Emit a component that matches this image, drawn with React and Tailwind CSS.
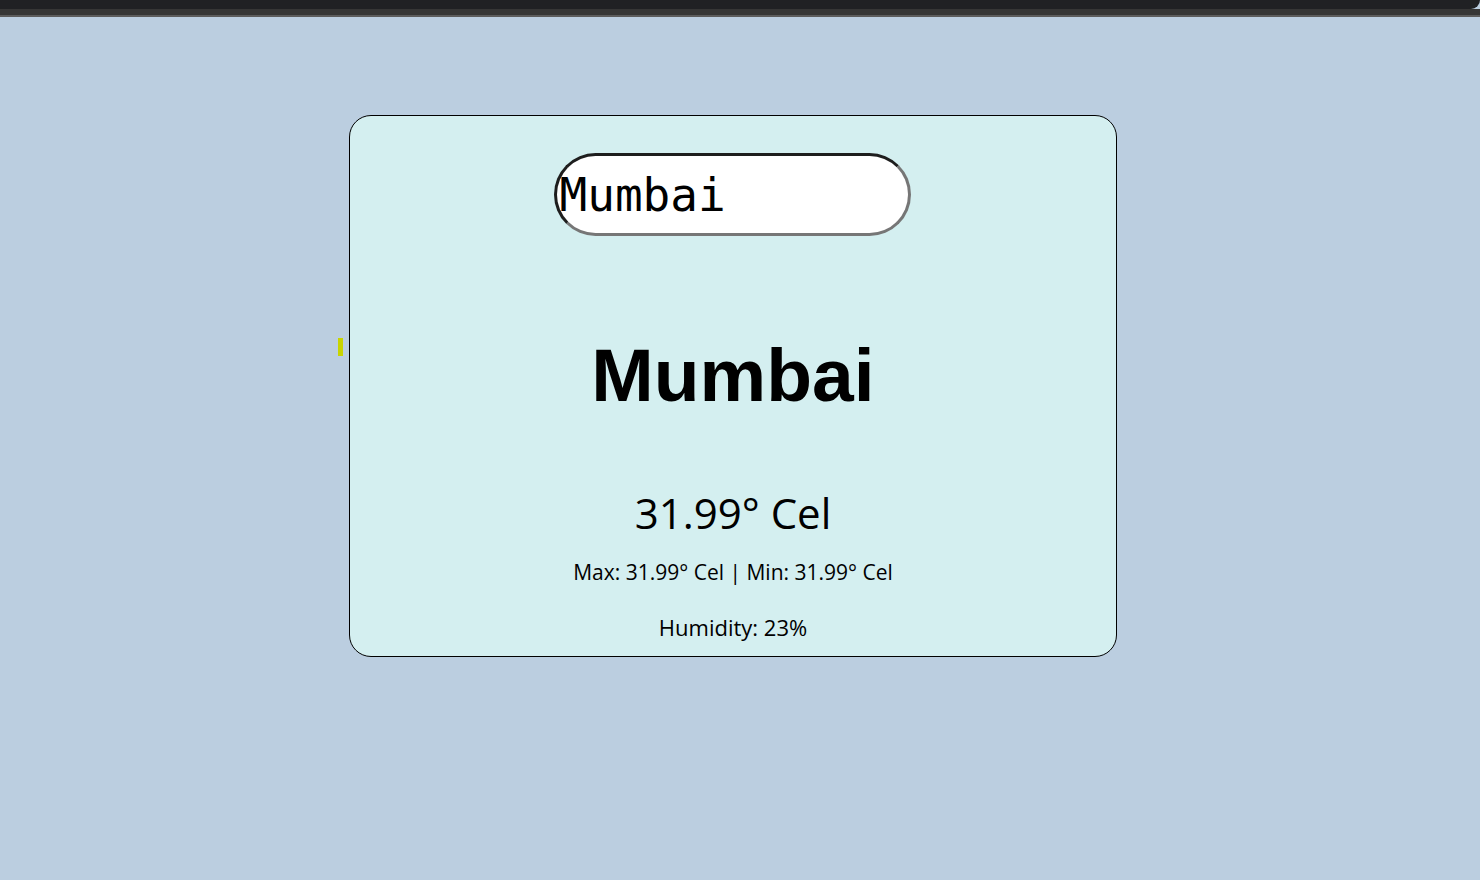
import React from 'react';

const App = () => {
    return (
        <div className="relative min-h-screen bg-[#bbcee0] font-['Liberation_Sans',sans-serif]">
            {/* browser chrome strip */}
            <div className="h-[9px] bg-[#202124] rounded-br-[10px]"></div>
            <div className="h-[6px] bg-[#363636]"></div>
            <div className="h-[2px] bg-[#5c5c5c]"></div>

            <div className="absolute left-[338px] top-[338px] w-[5px] h-[18px] bg-[#c8d400]"></div>

            <div className="ml-[349px] mt-[98px] w-[768px] h-[542px] bg-[#d4eff0] border border-black rounded-[22px] flex flex-col items-center pt-[37px]">
                <input
                    type="text"
                    defaultValue="Mumbai"
                    className="w-[357px] h-[83px] -ml-[2px] bg-white rounded-full border-[3px] border-t-[#1e1e1e] border-l-[#1e1e1e] border-r-[#767676] border-b-[#767676] pl-[3px] pr-3 text-[46px] text-black font-['DejaVu_Sans_Mono',monospace] outline-none"
                />

                <h1 className="mt-[102px] text-[75px] leading-none font-bold text-black">Mumbai</h1>

                <div className="mt-[79px] text-[42px] leading-none text-black font-['Open_Sans',sans-serif]">31.99° Cel</div>
                <div className="mt-[28px] text-[21px] leading-none text-black font-['Open_Sans',sans-serif]">Max: 31.99° Cel | Min: 31.99° Cel</div>
                <div className="mt-[33px] text-[22px] leading-none text-black font-['Open_Sans',sans-serif]">Humidity: 23%</div>
            </div>
        </div>
    );
};

export default App;
